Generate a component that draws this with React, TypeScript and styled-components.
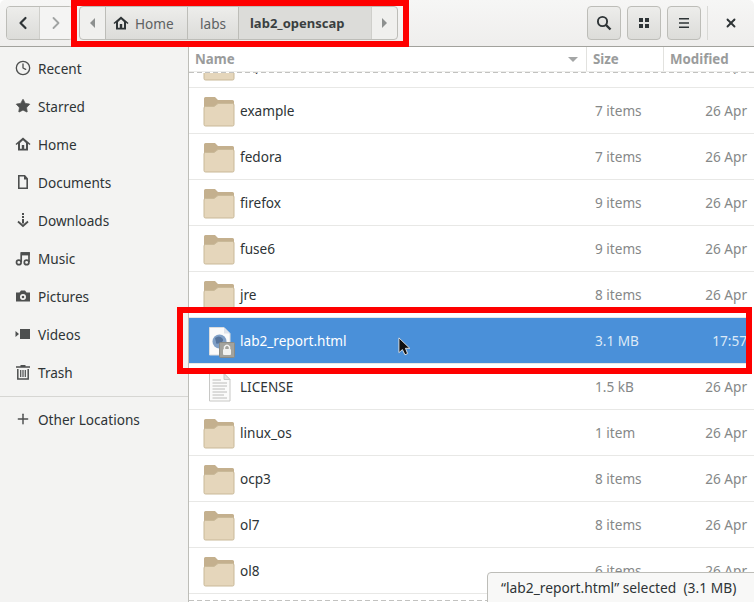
import React from 'react';
import styled, { createGlobalStyle } from 'styled-components';
import { ChevronLeft, ChevronRight, Clock, Plus, Star, X } from 'lucide-react';

const GlobalStyle = createGlobalStyle`
  html, body { margin: 0; padding: 0; }
  body { width: 754px; height: 602px; overflow: hidden; background: #fff; }
  * { box-sizing: border-box; }
`;

const FolderIcon = () => (
  <svg width="32" height="32" viewBox="0 0 32 32">
    <path d="M1 8 V3.5 Q1 2 2.5 2 H12 L15 5 H29.5 Q31 5 31 6.5 V12 H1 Z" fill="#c4b08e" />
    <path d="M1 13 Q1 11.5 2.5 11.5 H11 L15 8.5 H29.5 Q31 8.5 31 10 V29.5 Q31 31 29.5 31 H2.5 Q1 31 1 29.5 Z" fill="#e5d6bb" stroke="#c9b998" strokeWidth="1" />
  </svg>
);

const TextFileIcon = () => (
  <svg width="32" height="32" viewBox="0 0 32 32">
    <path d="M6.5 2.5 H21 L27 8.5 V30 H6.5 Z" fill="#fbfbfa" stroke="#c8c8c6" />
    <path d="M21 2.5 V8.5 H27 Z" fill="#e2e2e0" stroke="#c8c8c6" />
    <path d="M9.5 9 H18 M9.5 12 H24 M9.5 15 H24 M9.5 18 H22 M9.5 21 H24 M9.5 24 H21 M9.5 27 H24" stroke="#bcbcba" strokeWidth="1" />
  </svg>
);

const HtmlFileIcon = () => (
  <svg width="36" height="34" viewBox="0 0 36 34">
    <path d="M6.5 3.5 H21 L27 9.5 V31 H6.5 Z" fill="#fbfbfb" stroke="#dcdcdc" />
    <path d="M21 3.5 V9.5 H27 Z" fill="#dfe3ea" />
    <circle cx="16.5" cy="17.5" r="7" fill="#7f9fc6" />
    <path d="M12 14 Q16 11 19 14 T17 19 T13 18 Z" fill="#56749c" />
    <rect x="16.5" y="18.5" width="15" height="15" rx="1" fill="#a3a39d" stroke="#8b8b85" />
    <rect x="20" y="25" width="8" height="6" rx="1" fill="#f2f2f0" />
    <path d="M21.5 25 V23 Q24 19.5 26.5 23 V25" fill="none" stroke="#f2f2f0" strokeWidth="1.5" />
  </svg>
);

const HomeGlyph = () => (
  <svg width="16" height="16" viewBox="0 0 16 16">
    <path d="M0.5 8 L8 1.5 L15.5 8 L14.5 9 L13 7.8 V14.5 H3 V7.8 L1.5 9 Z M5 7 V12.8 H6.8 V9 H9.2 V12.8 H11 V7 L8 4.2 Z" fill="currentColor" fillRule="evenodd" />
  </svg>
);

const DocumentGlyph = () => (
  <svg width="16" height="16" viewBox="0 0 16 16">
    <path d="M3 1 H10 L13 4.5 V15 H3 Z M4.6 2.6 V13.4 H11.4 V5.5 H9 V2.6 Z" fill="currentColor" fillRule="evenodd" />
  </svg>
);

const DownloadGlyph = () => (
  <svg width="16" height="16" viewBox="0 0 16 16">
    <path d="M7 1 H9 V3 H7 Z M7 4 H9 V6 H7 Z M7 7 H9 V11.5 H7 Z" fill="currentColor" />
    <path d="M3 9.5 L8 14 L13 9.5" fill="none" stroke="currentColor" strokeWidth="1.8" />
  </svg>
);

const MusicGlyph = () => (
  <svg width="16" height="16" viewBox="0 0 16 16">
    <path d="M6.2 12 V3 H14 V12" fill="none" stroke="currentColor" strokeWidth="1.7" />
    <path d="M6 2.2 H14.8 V5.4 H6 Z" fill="currentColor" />
    <circle cx="3.8" cy="12.4" r="2.3" fill="none" stroke="currentColor" strokeWidth="1.7" />
    <circle cx="11.6" cy="12.4" r="2.3" fill="none" stroke="currentColor" strokeWidth="1.7" />
  </svg>
);

const CameraGlyph = () => (
  <svg width="16" height="16" viewBox="0 0 16 16">
    <path
      d="M1 4.5 H4.5 L6 2.5 H10 L11.5 4.5 H15 V13.5 H1 Z M8 6 A3 3 0 1 0 8 12 A3 3 0 1 0 8 6 Z M8 7.7 A1.3 1.3 0 1 1 8 10.3 A1.3 1.3 0 1 1 8 7.7 Z"
      fill="currentColor"
      fillRule="evenodd"
    />
  </svg>
);

const VideoGlyph = () => (
  <svg width="16" height="16" viewBox="0 0 16 16">
    <path d="M5 3 H15 V13 H5 Z M0.5 5 L4 8 L0.5 11 Z" fill="currentColor" />
  </svg>
);

const TrashGlyph = () => (
  <svg width="16" height="16" viewBox="0 0 16 16">
    <path d="M5.5 1 H10.5 V2.2 H15 V3.8 H1 V2.2 H5.5 Z" fill="currentColor" />
    <path d="M2.8 5 V15 H13.2 V5" fill="none" stroke="currentColor" strokeWidth="1.5" />
    <path d="M5.7 6 V13 M8 6 V13 M10.3 6 V13" stroke="currentColor" strokeWidth="1.2" />
  </svg>
);

const SearchGlyph = () => (
  <svg width="16" height="16" viewBox="0 0 16 16">
    <circle cx="6.5" cy="6.5" r="4.6" fill="none" stroke="currentColor" strokeWidth="1.9" />
    <path d="M10 10 L14.5 14.5" stroke="currentColor" strokeWidth="2.4" />
  </svg>
);

const GridGlyph = () => (
  <svg width="16" height="16" viewBox="0 0 16 16">
    <path d="M3 3 H7 V7 H3 Z M9 3 H13 V7 H9 Z M3 9 H7 V13 H3 Z M9 9 H13 V13 H9 Z" fill="currentColor" />
  </svg>
);

const MenuGlyph = () => (
  <svg width="16" height="16" viewBox="0 0 16 16">
    <path d="M3 3 H13 V4.6 H3 Z M3 7.2 H13 V8.8 H3 Z M3 11.4 H13 V13 H3 Z" fill="currentColor" />
  </svg>
);

const places = [
  { label: 'Recent', icon: <Clock size={16} strokeWidth={2} /> },
  { label: 'Starred', icon: <Star size={16} fill="currentColor" strokeWidth={1} /> },
  { label: 'Home', icon: <HomeGlyph /> },
  { label: 'Documents', icon: <DocumentGlyph /> },
  { label: 'Downloads', icon: <DownloadGlyph /> },
  { label: 'Music', icon: <MusicGlyph /> },
  { label: 'Pictures', icon: <CameraGlyph /> },
  { label: 'Videos', icon: <VideoGlyph /> },
  { label: 'Trash', icon: <TrashGlyph /> },
];

type Kind = 'folder' | 'text' | 'html';

const files: { name: string; size: string; modified: string; kind: Kind; selected?: boolean }[] = [
  { name: 'cop', size: '7 items', modified: '26 Apr', kind: 'folder' },
  { name: 'example', size: '7 items', modified: '26 Apr', kind: 'folder' },
  { name: 'fedora', size: '7 items', modified: '26 Apr', kind: 'folder' },
  { name: 'firefox', size: '9 items', modified: '26 Apr', kind: 'folder' },
  { name: 'fuse6', size: '9 items', modified: '26 Apr', kind: 'folder' },
  { name: 'jre', size: '8 items', modified: '26 Apr', kind: 'folder' },
  { name: 'lab2_report.html', size: '3.1 MB', modified: '17:57', kind: 'html', selected: true },
  { name: 'LICENSE', size: '1.5 kB', modified: '26 Apr', kind: 'text' },
  { name: 'linux_os', size: '1 item', modified: '26 Apr', kind: 'folder' },
  { name: 'ocp3', size: '8 items', modified: '26 Apr', kind: 'folder' },
  { name: 'ol7', size: '8 items', modified: '26 Apr', kind: 'folder' },
  { name: 'ol8', size: '6 items', modified: '26 Apr', kind: 'folder' },
];

const fileIcons: Record<Kind, React.ReactNode> = {
  folder: <FolderIcon />,
  text: <TextFileIcon />,
  html: <HtmlFileIcon />,
};

export default function App() {
  return (
    <Win>
      <GlobalStyle />
      <Header>
        <NavGroup>
          <NavButton><ChevronLeft size={20} strokeWidth={2.6} /></NavButton>
          <NavButton $disabled><ChevronRight size={20} strokeWidth={2.2} /></NavButton>
        </NavGroup>
        <PathBar>
          <PathArrow $side="left" />
          <PathItem $width={82} $inset={7}><HomeGlyph />Home</PathItem>
          <PathItem $width={51} $inset={12}>labs</PathItem>
          <PathItem $width={134} $inset={11} $current>lab2_openscap</PathItem>
          <PathArrow $side="right" />
        </PathBar>
        <HeaderSpacer />
        <ToolButton><SearchGlyph /></ToolButton>
        <ToolButton><GridGlyph /></ToolButton>
        <ToolButton><MenuGlyph /></ToolButton>
        <HeaderDivider />
        <CloseButton><X size={14} strokeWidth={3.2} /></CloseButton>
      </Header>
      <Body>
        <Sidebar>
          <PlaceList>
            {places.map((p) => (
              <PlaceRow key={p.label}>
                <PlaceIcon>{p.icon}</PlaceIcon>
                {p.label}
              </PlaceRow>
            ))}
          </PlaceList>
          <SidebarRule />
          <PlaceRow>
            <PlaceIcon><Plus size={16} strokeWidth={2.2} /></PlaceIcon>
            Other Locations
          </PlaceRow>
        </Sidebar>
        <Main>
          <ColumnHeader>
            <NameHead>Name<SortCaret /></NameHead>
            <SizeHead>Size</SizeHead>
            <ModifiedHead>Modified</ModifiedHead>
          </ColumnHeader>
          <DashLine />
          <Scroller>
            <List>
              {files.map((f) => (
                <Row key={f.name} $selected={f.selected}>
                  <FileIcon>{fileIcons[f.kind]}</FileIcon>
                  <FileName>{f.name}</FileName>
                  <FileSize $selected={f.selected}>{f.size}</FileSize>
                  <FileDate $selected={f.selected}>{f.modified}</FileDate>
                </Row>
              ))}
            </List>
          </Scroller>
          <DashLine />
        </Main>
      </Body>
      <PathHighlight />
      <RowHighlight />
      <Cursor width="14" height="20" viewBox="0 0 16 23">
        <path d="M1 1 V18 L5 14.5 L8 20.5 L11 19 L8.5 13 L13.5 13 Z" fill="#111" stroke="#eee" strokeWidth="1" />
      </Cursor>
      <StatusBubble>“lab2_report.html” selected  (3.1 MB)</StatusBubble>
    </Win>
  );
}

const font = `"Noto Sans", "Open Sans", sans-serif`;

const Win = styled.div`
  position: relative;
  width: 754px;
  height: 602px;
  overflow: hidden;
  display: flex;
  flex-direction: column;
  font-family: ${font};
  font-size: 13.6px;
  color: #2e3436;
`;

const Header = styled.header`
  flex: none;
  height: 47px;
  padding: 6px 0 6px 6px;
  display: flex;
  align-items: center;
  background: linear-gradient(#f6f6f5, #efeeed);
  border-bottom: 1px solid #a2a29d;
  border-radius: 5px 5px 0 0;
`;

const NavGroup = styled.div`
  flex: none;
  display: flex;
  width: 67px;
  height: 34px;
  border: 1px solid #bdbdb8;
  border-radius: 4px;
  overflow: hidden;
`;

const NavButton = styled.button<{ $disabled?: boolean }>`
  all: unset;
  flex: 1;
  display: flex;
  align-items: center;
  justify-content: center;
  color: ${(p) => (p.$disabled ? '#a1a4a3' : '#2e3436')};
  background: ${(p) => (p.$disabled ? '#f4f4f3' : 'linear-gradient(#ededeb, #dcdcd9)')};
  & + & { border-left: 1px solid #cfcfcb; }
`;

const PathBar = styled.nav`
  flex: none;
  display: flex;
  height: 34px;
  margin-left: 6px;
  border: 1px solid #bdbdb8;
  border-radius: 4px;
  overflow: hidden;
  background: #f0f0ee;
`;

const PathArrow = styled.span<{ $side: 'left' | 'right' }>`
  width: 25px;
  display: flex;
  align-items: center;
  justify-content: center;
  &::before {
    content: '';
    border-style: solid;
    border-width: 5px 0 5px 5px;
    border-color: transparent transparent transparent #8d908f;
    transform: ${(p) => (p.$side === 'left' ? 'scaleX(-1)' : 'none')};
  }
`;

const PathItem = styled.span<{ $width: number; $inset: number; $current?: boolean }>`
  width: ${(p) => p.$width}px;
  padding-left: ${(p) => p.$inset}px;
  display: flex;
  align-items: center;
  gap: 6px;
  border-left: 1px solid #bdbdb8;
  font-weight: ${(p) => (p.$current ? 700 : 400)};
  font-size: ${(p) => (p.$current ? '13px' : '13.6px')};
  color: ${(p) => (p.$current ? '#3a3f40' : '#5d6162')};
  background: ${(p) => (p.$current ? '#dcdcd9' : 'linear-gradient(#ededeb, #dcdcd9)')};
  &:nth-last-child(2) { border-right: 1px solid #cfcfcb; }
  & svg { color: #2e3436; }
`;

const HeaderSpacer = styled.div`
  flex: 1;
`;

const ToolButton = styled.button`
  all: unset;
  box-sizing: border-box;
  flex: none;
  width: 34px;
  height: 34px;
  margin-left: 6px;
  display: flex;
  align-items: center;
  justify-content: center;
  border: 1px solid #bdbdb8;
  border-radius: 4px;
  background: linear-gradient(#ededeb, #dcdcd9);
  color: #2e3436;
`;

const HeaderDivider = styled.div`
  flex: none;
  width: 1px;
  height: 34px;
  margin-left: 6px;
  background: #d9d9d6;
`;

const CloseButton = styled.button`
  all: unset;
  flex: none;
  width: 46px;
  display: flex;
  align-items: center;
  justify-content: center;
  color: #2e3436;
`;

const Body = styled.div`
  flex: 1;
  min-height: 0;
  display: flex;
`;

const Sidebar = styled.aside`
  flex: none;
  width: 189px;
  padding-top: 2px;
  background: #f3f3f2;
  border-right: 1px solid #bdbdb8;
`;

const PlaceList = styled.div`
  display: flex;
  flex-direction: column;
`;

const PlaceRow = styled.div`
  height: 38px;
  padding-left: 15px;
  display: flex;
  align-items: center;
  gap: 7px;
  color: #2e3436;
`;

const PlaceIcon = styled.span`
  width: 16px;
  height: 16px;
  display: flex;
  color: #4d4f4f;
`;

const SidebarRule = styled.div`
  height: 1px;
  margin: 5px 0 3px;
  background: #d6d6d3;
`;

const Main = styled.main`
  flex: 1;
  min-width: 0;
  display: flex;
  flex-direction: column;
  padding-bottom: 1px;
  background: #fff;
`;

const ColumnHeader = styled.div`
  flex: none;
  height: 25px;
  display: flex;
  font-weight: 700;
  font-size: 13.3px;
  color: #9a9c9c;
  border-bottom: 1px solid #ececea;
`;

const NameHead = styled.div`
  width: 398px;
  padding-left: 6px;
  display: flex;
  align-items: center;
  justify-content: space-between;
  border-right: 1px solid #e2e2df;
`;

const SortCaret = styled.span`
  margin-right: 8px;
  border-style: solid;
  border-width: 5px 5px 0;
  border-color: #a4a6a6 transparent transparent;
`;

const SizeHead = styled.div`
  width: 77px;
  padding-left: 6px;
  display: flex;
  align-items: center;
  border-right: 1px solid #e2e2df;
`;

const ModifiedHead = styled.div`
  flex: 1;
  padding-left: 6px;
  display: flex;
  align-items: center;
`;

const DashLine = styled.div`
  flex: none;
  height: 1px;
  background: repeating-linear-gradient(90deg, #c2c2c0 0 5px, transparent 5px 8px);
`;

const Scroller = styled.div`
  flex: 1;
  min-height: 0;
  overflow: hidden;
`;

const List = styled.div`
  margin-top: -31px;
`;

const Row = styled.div<{ $selected?: boolean }>`
  height: 46px;
  display: flex;
  align-items: center;
  padding-left: 14px;
  border-bottom: 1px solid #e8e8e6;
  background: ${(p) => (p.$selected ? '#4a90d9' : '#fff')};
  color: ${(p) => (p.$selected ? '#fff' : '#2e3436')};
`;

const FileIcon = styled.span`
  width: 37px;
  display: flex;
`;

const FileName = styled.span`
  width: 355px;
`;

const FileSize = styled.span<{ $selected?: boolean }>`
  width: 78px;
  color: ${(p) => (p.$selected ? '#dce9f7' : '#858888')};
`;

const FileDate = styled.span<{ $selected?: boolean }>`
  flex: 1;
  padding-right: 7px;
  text-align: right;
  color: ${(p) => (p.$selected ? '#dce9f7' : '#858888')};
`;

const PathHighlight = styled.div`
  position: absolute;
  left: 71px;
  top: 0;
  width: 338px;
  height: 47px;
  border: 6px solid #fe0000;
  pointer-events: none;
`;

const RowHighlight = styled.div`
  position: absolute;
  left: 177px;
  top: 307px;
  width: 575px;
  height: 67px;
  border: 6px solid #fe0000;
  box-shadow: 2px 0 0 #fff;
  pointer-events: none;
`;

const Cursor = styled.svg`
  position: absolute;
  left: 398px;
  top: 337px;
`;

const StatusBubble = styled.div`
  position: absolute;
  left: 487px;
  top: 572px;
  width: 268px;
  height: 31px;
  padding-left: 13px;
  display: flex;
  align-items: center;
  white-space: pre;
  font-size: 13.8px;
  color: #2e3436;
  background: #f8f8f7;
  border: 1px solid #bdbdb8;
  border-radius: 4px 0 0 0;
`;
